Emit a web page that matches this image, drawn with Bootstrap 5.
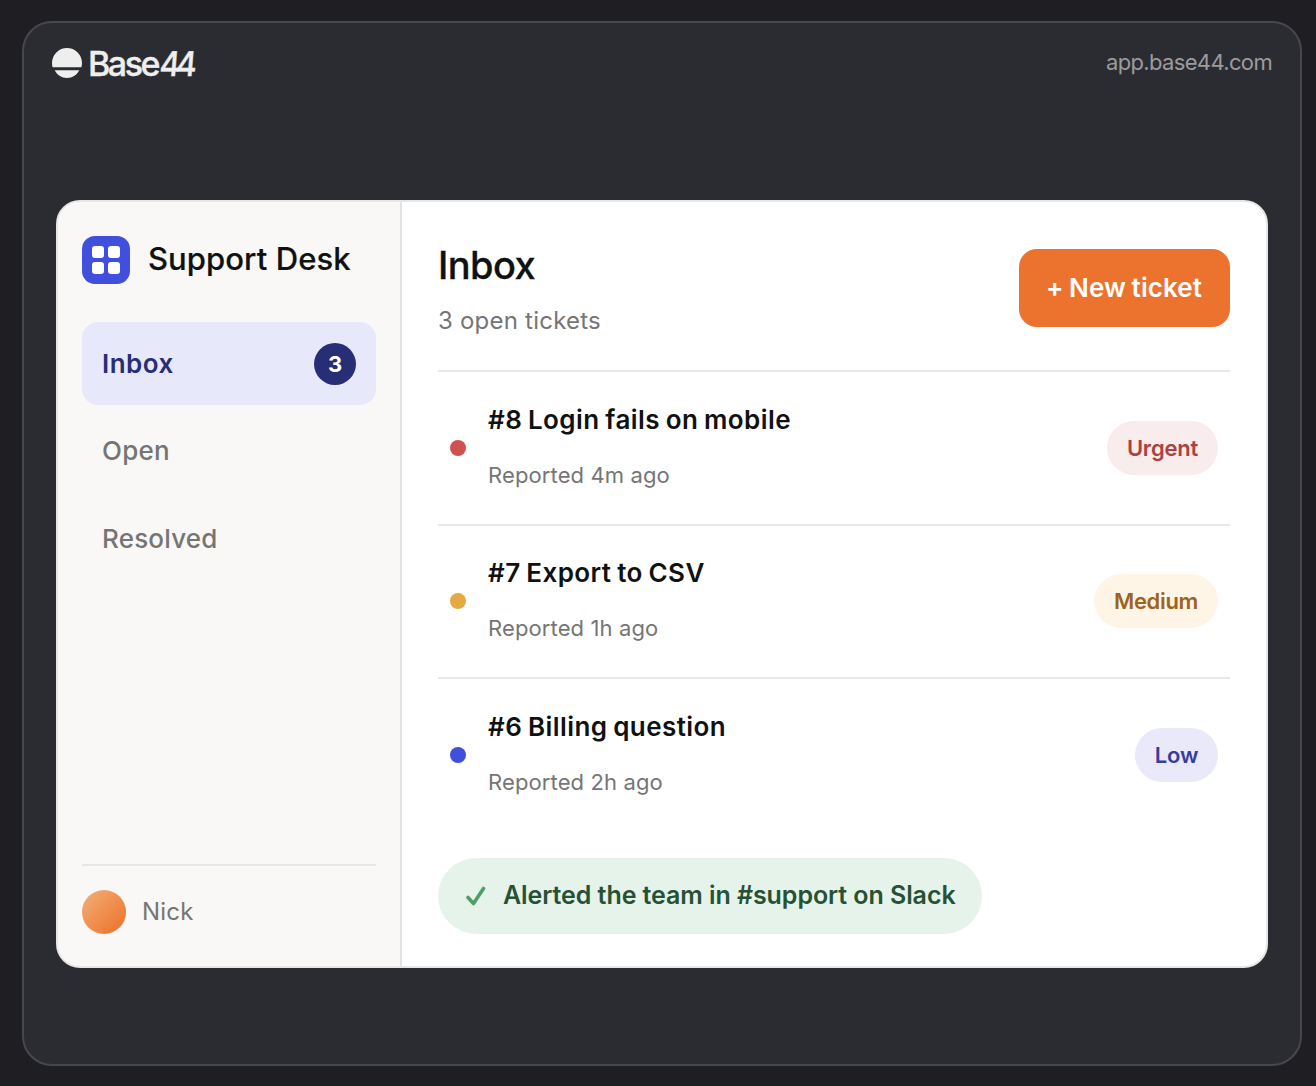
<!DOCTYPE html>
<html lang="en">
<head>
<meta charset="utf-8">
<meta name="viewport" content="width=device-width, initial-scale=1">
<title>Support Desk</title>
<link href="https://cdn.jsdelivr.net/npm/bootstrap@5.3.0/dist/css/bootstrap.min.css" rel="stylesheet">
<style>
body{background:#1f1e23;font-family:Inter,"Liberation Sans",sans-serif;height:1086px;padding:21px 14px 20px 22px;overflow:hidden;color:#101111}
.stage{background:#2b2c31;border:2px solid #47484c;border-radius:30px;height:1045px;padding:0 32px}
.stage-top{height:80px;margin:0 -4px}
.brand{gap:6px}
.brand-name{font-size:34px;font-weight:500;letter-spacing:-2.5px;color:#eeeeee;line-height:40px;-webkit-text-stroke:.4px #eeeeee;padding-top:1px}
.brand-num{display:inline-block;letter-spacing:-4.5px;transform:scaleX(.93) skewX(-5deg);transform-origin:left bottom}
.host{font-size:22px;color:#9b9b9e;line-height:28px;letter-spacing:-.65px;padding-bottom:2px}
.desk{margin-top:97px;height:768px;border:2px solid #e6e6e6;border-radius:24px;background:#fff;overflow:hidden}
.side{width:344px;background:#f9f8f6;border-right:2px solid #e3e3e1;padding:34px 24px 32px}
.side-title{font-size:31px;font-weight:500;line-height:40px;padding:0 0 2px 2px;letter-spacing:.08px;-webkit-text-stroke:.2px #101111}
.side-nav{margin-top:38px;gap:4.5px}
.side-item{height:83px;padding:0 20px;border-radius:16px;font-size:26px;font-weight:500;color:#757573;letter-spacing:.2px}
.side-item.is-on{background:#e8e8fb;color:#282e75;font-weight:600;letter-spacing:.45px}
.side-open{padding-bottom:1px}
.count{width:42px;height:42px;background:#282e75;font-size:22px;font-weight:700;letter-spacing:0;padding-top:1px}
.user-row{border-top:2px solid #e6e6e3;padding-top:24px;font-size:24px;color:#757573;letter-spacing:.2px}
.avatar-dot{width:44px;height:44px;background:linear-gradient(135deg,#f4b07a,#ec752e 90%)}
.pane{padding:0 36px}
.pane-head{height:168px}
.pane-title{font-size:38px;font-weight:500;line-height:46px;margin-top:40px;letter-spacing:-.6px;-webkit-text-stroke:.3px #101111}
.pane-sub{font-size:24px;color:#757575;line-height:32px;margin-top:17px;letter-spacing:.22px}
.btn-new{--bs-btn-color:#fff;--bs-btn-bg:#ec732e;--bs-btn-hover-color:#fff;--bs-btn-hover-bg:#dd6826;width:211px;height:78px;margin-top:47px;border-radius:18px;border:0;padding:0 1px 1px 0;font-size:26px;font-weight:600;letter-spacing:.1px;word-spacing:-1px}
.ticket{border-top:2px solid #e9e9e9;height:153.500px;padding:0 12px}
.dot{width:16px;height:16px}
.t-body{padding:0 0 4px 22px}
.t-title{font-size:26px;font-weight:600;line-height:34px;letter-spacing:.42px;word-spacing:-1.2px}
.t-sub{font-size:22px;color:#757575;line-height:28px;margin-top:24px;letter-spacing:.12px}
.pill{height:54px;font-size:22px;font-weight:600;line-height:54px;letter-spacing:-.2px}
.p-red{width:111px;background:#f9ecec;color:#ab4141}
.p-yellow{width:124px;background:#fff5e6;color:#9d631f;letter-spacing:-.35px}
.p-blue{width:83px;background:#e9e9fa;color:#373d9c}
.alert-pill{width:544px;height:76px;margin-top:27.500px;background:#e6f3ea;color:#265135;font-size:25px;font-weight:600;padding:0 0 1px 28px;letter-spacing:-.07px}
.alert-text{margin-left:17px}
</style>
</head>
<body>
<main class="stage d-flex flex-column">
  <header class="stage-top d-flex align-items-center justify-content-between">
    <div class="brand d-flex align-items-center">
      <svg width="30" height="30" viewBox="0 0 30 30" fill="#eeeeee"><path d="M0 15a15 15 0 0 1 30 0q0 2.200-.6 4.200H.6Q0 17.200 0 15ZM2.600 22.200H27.400A15 15 0 0 1 15 30 15 15 0 0 1 2.600 22.200Z"/></svg>
      <span class="brand-name">Base<span class="brand-num">44</span></span>
    </div>
    <span class="host">app.base44.com</span>
  </header>
  <section class="desk d-flex">
    <aside class="side d-flex flex-column flex-shrink-0">
      <div class="d-flex align-items-center">
        <svg width="48" height="48" viewBox="0 0 48 48"><rect width="48" height="48" rx="13" fill="#4050dc"/><g fill="#fff"><rect x="10" y="10" width="12" height="12" rx="3"/><rect x="26" y="10" width="12" height="12" rx="3"/><rect x="10" y="26" width="12" height="12" rx="3"/><rect x="26" y="26" width="12" height="12" rx="3"/></g></svg>
        <span class="side-title ms-3">Support Desk</span>
      </div>
      <nav class="side-nav d-flex flex-column">
        <a class="side-item is-on d-flex align-items-center justify-content-between text-decoration-none"><span>Inbox</span><span class="count rounded-circle text-white d-flex align-items-center justify-content-center">3</span></a>
        <a class="side-item side-open d-flex align-items-center text-decoration-none">Open</a>
        <a class="side-item d-flex align-items-center text-decoration-none">Resolved</a>
      </nav>
      <div class="user-row d-flex align-items-center gap-3 mt-auto"><span class="avatar-dot rounded-circle"></span><span>Nick</span></div>
    </aside>
    <div class="pane flex-grow-1">
      <div class="pane-head d-flex justify-content-between align-items-start">
        <div><h1 class="pane-title mb-0">Inbox</h1><p class="pane-sub mb-0">3 open tickets</p></div>
        <button class="btn btn-new">+ New ticket</button>
      </div>
      <div class="ticket d-flex align-items-center"><span class="dot rounded-circle" style="background:#d05052"></span><div class="t-body flex-grow-1"><div class="t-title">#8 Login fails on mobile</div><div class="t-sub">Reported 4m ago</div></div><span class="pill p-red rounded-pill text-center">Urgent</span></div>
      <div class="ticket d-flex align-items-center"><span class="dot rounded-circle" style="background:#e6a840"></span><div class="t-body flex-grow-1"><div class="t-title">#7 Export to CSV</div><div class="t-sub">Reported 1h ago</div></div><span class="pill p-yellow rounded-pill text-center">Medium</span></div>
      <div class="ticket d-flex align-items-center"><span class="dot rounded-circle" style="background:#4050dc"></span><div class="t-body flex-grow-1"><div class="t-title">#6 Billing question</div><div class="t-sub">Reported 2h ago</div></div><span class="pill p-blue rounded-pill text-center">Low</span></div>
      <div class="alert-pill rounded-pill d-flex align-items-center"><svg width="20" height="20" viewBox="0 0 20 20" fill="none" stroke="#4f9f64" stroke-width="3.600" stroke-linecap="round" stroke-linejoin="round"><path d="M2 11.500l5.500 6L17.500 2.500"/></svg><span class="alert-text">Alerted the team in #support on Slack</span></div>
    </div>
  </section>
</main>
<script src="https://cdn.jsdelivr.net/npm/bootstrap@5.3.0/dist/js/bootstrap.bundle.min.js"></script>
</body>
</html>
